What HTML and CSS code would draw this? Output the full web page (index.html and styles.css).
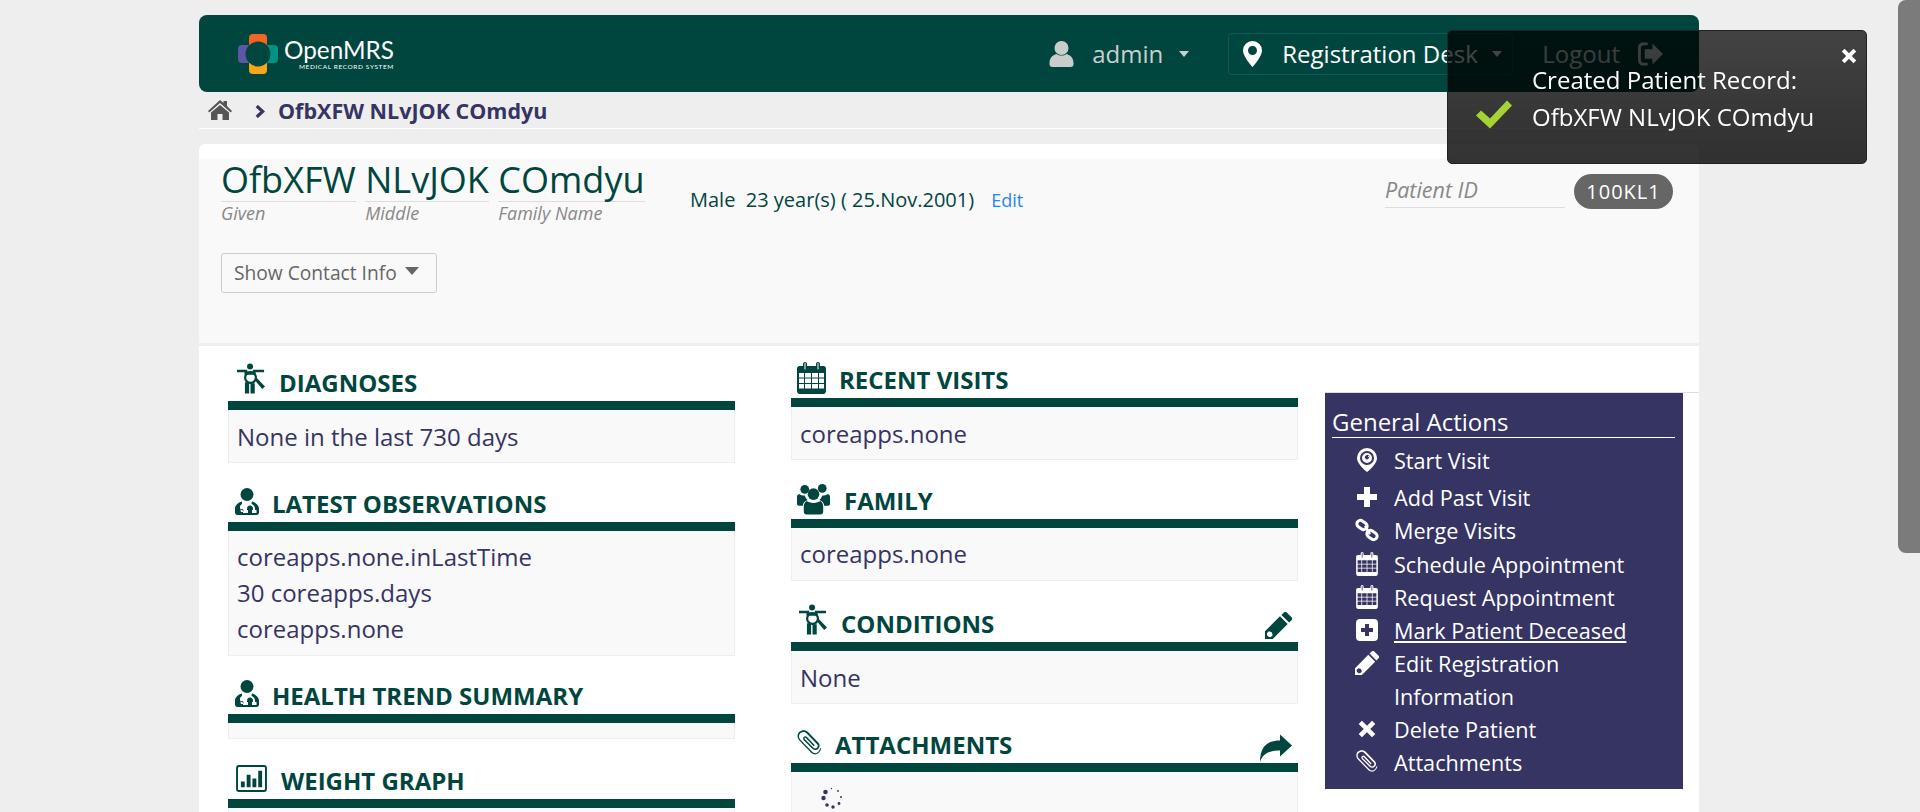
FILE: index.html
```html
<!DOCTYPE html>
<html lang="en">
<head>
<meta charset="UTF-8">
<meta name="viewport" content="width=device-width, initial-scale=1.0">
<title>OpenMRS - Patient Dashboard</title>
<link rel="stylesheet" href="styles.css">
</head>
<body>

<!-- shared icons -->
<svg class="sprite" xmlns="http://www.w3.org/2000/svg">
    <symbol id="i-body" viewBox="0 0 30 32">
        <circle cx="14" cy="3.200" r="3.200"/>
        <path d="M0 6.500h11v2.800H0zM17 6.500h12v2.800H17z"/>
        <path d="M8 8.500h12V12H8z"/>
        <path fill-rule="evenodd" d="M14.500 8a7 7 0 1 1 0 14 7 7 0 0 1 0-14zm0 2.400a4.600 4.600 0 1 0 0 9.200 4.600 4.600 0 0 0 0-9.200z"/>
        <path d="M8.500 20h4.500v12H8.500zM14.500 21H19v11h-4.500zM19 17.500l2.200-2 8.800 9-3 2.800z"/>
    </symbol>
    <symbol id="i-doctor" viewBox="0 0 24 27">
        <circle cx="12" cy="6.500" r="6.500"/>
        <path fill-rule="evenodd" d="M7 13.500C3 14.500 0 17 0 21v3.500C0 26 1 27 2.500 27h19c1.500 0 2.500-1 2.500-2.500V21c0-4-3-6.500-7-7.500l-.5 2.500c2.500 1 3.500 2.500 3.500 5v1h1.500v3h-4.500v-3h1v-1c0-2-1-3.500-3-3.500s-3 1.500-3 3.500v1h1v3H8v-2.600a3 3 0 0 1-3-3.400c0-1.500 1-2.500 2-3zM7 21a1.500 1.500 0 1 0 0 3 1.500 1.500 0 0 0 0-3z"/>
    </symbol>
    <symbol id="i-chart" viewBox="0 0 32 28">
        <path fill-rule="evenodd" d="M3 0h26a3 3 0 0 1 3 3v22a3 3 0 0 1-3 3H3a3 3 0 0 1-3-3V3a3 3 0 0 1 3-3zm0 2a1 1 0 0 0-1 1v22a1 1 0 0 0 1 1h26a1 1 0 0 0 1-1V3a1 1 0 0 0-1-1z"/>
        <path d="M5 17h4v6H5zM11 10h4v13h-4zM17 14h4v9h-4zM23 6h4v17h-4z"/>
    </symbol>
    <symbol id="i-calendar" viewBox="0 0 29 32">
        <path fill-rule="evenodd" d="M6 4V2a2 2 0 0 1 4 0v2h9V2a2 2 0 0 1 4 0v2h3.500C28 4 29 5 29 6.500V29c0 1.500-1 3-2.500 3h-24C1 32 0 30.500 0 29V6.500C0 5 1 4 2.500 4zm1.500-2.500V7a.5.5 0 0 0 1 0V1.500a.5.5 0 0 0-1 0zm13 0V7a.5.5 0 0 0 1 0V1.500a.5.5 0 0 0-1 0zM2 11v4.500h5V11zm6 0v4.500h6V11zm7 0v4.500h6V11zm7 0v4.500h5V11zM2 16.500V21h5v-4.500zm6 0V21h6v-4.500zm7 0V21h6v-4.500zm7 0V21h5v-4.500zM2 22v4.500h5V22zm6 0v4.500h6V22zm7 0v4.500h6V22zm7 0v4.500h5V22z"/>
    </symbol>
    <symbol id="i-group" viewBox="0 0 34 32">
        <circle cx="8" cy="6" r="4.500"/>
        <circle cx="26" cy="5" r="4.500"/>
        <circle cx="17" cy="11" r="6"/>
        <path d="M0 13.500c0-2 1.500-2.500 3-2.500 1 1 2.500 1.500 5 1.500.5 2 1.500 3.500 3 4.500-3 1-5 3.500-5 6H2c-1 0-2-.5-2-2zM34 13.500c0-2-1.500-2.500-3-2.500-1 1-2.500 1.500-5 1.500-.5 2-1.500 3.500-3 4.500 3 1 5 3.500 5 6h4c1 0 2-.5 2-2zM10 18c1.500 1 4 2 7 2s5.500-1 7-2c2 1 3 3 3 6v5c0 2-1 3-3 3H10c-2 0-3-1-3-3v-5c0-3 1-5 3-6z"/>
    </symbol>
    <symbol id="i-pencil" viewBox="0 0 28 28">
        <path fill-rule="evenodd" d="M21 0a2 2 0 0 1 1.500.5l5 5a2 2 0 0 1 0 3L25 11l-8-8 2.500-2.500A2 2 0 0 1 21 0zM15.500 4.500l8 8L8 28H0v-8zM4 20l-2 2v2l2 2h2l2-2-1-3z"/>
    </symbol>
    <symbol id="i-clip" viewBox="0 0 26 28">
        <path d="M25 18.500c0 5-5.500 9-10 5.500L2.500 11C-1 7 1 3 2.500 1.800 5 -.3 9 -.5 11.500 2l11 11.500c2 2.500.5 5-.5 6-1.500 1.500-4 2-6 0L7 10.500c-1-1.200-.8-2.600.2-3.500 1-.8 2.300-.8 3.300.2l8 8.500-1.200 1.200-8-8.500c-.4-.4-.8-.4-1.100-.1-.3.3-.4.700 0 1.200l9 9c1 1.100 2.600.8 3.500-.1.900-.9 1.500-2.400.2-3.700L9.900 3.400C8 1.500 5.500 1.700 3.700 3.200 2.200 4.500 1 7.500 3.800 10.300L16.300 23c3.500 2.800 7.300-.8 7.500-3.500z"/>
    </symbol>
    <symbol id="i-share" viewBox="0 0 32 28">
        <path d="M32 11 20 0v6C8 6 0 11 0 28c2-8 8-12 20-12v6z"/>
    </symbol>
    <symbol id="i-pin-circle" viewBox="-2 0 24 24">
        <path fill-rule="evenodd" d="M10 0a10 10 0 0 1 10 10c0 5-6 11-10 14C6 21 0 15 0 10A10 10 0 0 1 10 0zm0 3a7 7 0 1 0 0 14 7 7 0 0 0 0-14zm0 2a5 5 0 1 1 0 10 5 5 0 0 1 0-10zM9 7.500a2 2 0 1 0 2 0v1.500h1.500A2 2 0 0 0 9 7.500z"/>
    </symbol>
    <symbol id="i-plus" viewBox="-2 -2 24 24">
        <path d="M7 0h6v7h7v6h-7v7H7v-7H0V7h7z"/>
    </symbol>
    <symbol id="i-link" viewBox="0 0 24 24">
        <g fill="none" stroke="#fff" stroke-width="3">
            <rect x="1.500" y="3.500" width="11" height="7" rx="3.500" transform="rotate(35 7 7)"/>
            <rect x="11.500" y="13.500" width="11" height="7" rx="3.500" transform="rotate(35 17 17)"/>
        </g>
        <path d="M9 8.500 11 7l5 8.500-2 1.500z"/>
    </symbol>
    <symbol id="i-plus-square" viewBox="-1 -1 24 24">
        <path fill-rule="evenodd" d="M4 0h14a4 4 0 0 1 4 4v14a4 4 0 0 1-4 4H4a4 4 0 0 1-4-4V4a4 4 0 0 1 4-4zm5 5v4H5v4h4v4h4v-4h4V9h-4V5z"/>
    </symbol>
    <symbol id="i-times" viewBox="-3 -3 26 26">
        <path d="M4.500 1 10 6.500 15.500 1 19 4.500 13.500 10l5.500 5.500-3.500 3.500L10 13.500 4.500 19 1 15.500 6.500 10 1 4.500z"/>
    </symbol>
    <symbol id="i-times-small" viewBox="0 0 20 20">
        <path d="M4.500 1 10 6.500 15.500 1 19 4.500 13.500 10l5.500 5.500-3.500 3.500L10 13.500 4.500 19 1 15.500 6.500 10 1 4.500z"/>
    </symbol>
</svg>

<div class="page">
    <header class="topbar">
        <div class="logo">
            <svg class="logo-mark" viewBox="0 0 40 40">
                <rect fill="#f26522" x="11" y="0" width="18" height="16" rx="4"/>
                <rect fill="#009384" x="24" y="11" width="16" height="18" rx="4"/>
                <rect fill="#f9a61a" x="11" y="24" width="18" height="16" rx="4"/>
                <rect fill="#5b57a6" x="0" y="11" width="16" height="18" rx="4"/>
                <circle fill="#00463f" cx="20" cy="20" r="12.500"/>
            </svg>
            <div class="logo-text">
                <span class="logo-name">OpenMRS</span>
                <span class="logo-sub">MEDICAL RECORD SYSTEM</span>
            </div>
        </div>
        <div class="nav-item nav-user">
            <svg class="nav-icon-user" viewBox="0 0 24 26"><circle cx="12" cy="7" r="7"/><path d="M7 13c3 2 7 2 10 0 4 1 7 4 7 9v1c0 2-1 3-3 3H3c-2 0-3-1-3-3v-1c0-5 3-8 7-9z"/></svg>
            <span>admin</span>
            <i class="caret"></i>
        </div>
        <div class="nav-item nav-location">
            <svg class="nav-icon-pin" viewBox="0 0 19 26"><path fill-rule="evenodd" d="M9.500 0A9.500 9.500 0 0 1 19 9.500C19 15 12 23 9.500 26 7 23 0 15 0 9.500A9.500 9.500 0 0 1 9.500 0zm0 5a4.500 4.500 0 1 0 0 9 4.500 4.500 0 0 0 0-9z"/></svg>
            <span>Registration Desk</span>
            <i class="caret"></i>
        </div>
        <div class="nav-item nav-logout">
            <span>Logout</span>
            <svg class="nav-icon-logout" viewBox="0 0 26 24"><path d="M10 0v3H6C4 3 3 4 3 6v12c0 2 1 3 3 3h4v3H6c-4 0-6-2-6-6V6c0-4 2-6 6-6z"/><path d="M26 12 15 1v6H7v10h8v6z"/></svg>
        </div>
    </header>

    <div class="crumbs">
        <svg class="crumb-home" viewBox="0 0 24 20"><path d="M12 0 15.500 3V1H19v5l5 5-1.200 1.400L12 3 1.200 12.400 0 11z"/><path d="M12 5l9 7.500V20h-6.500v-6h-5v6H3v-7.500z"/></svg>
        <svg class="crumb-sep" viewBox="0 0 9 12"><path d="M1.500 1 7 6l-5.500 5" fill="none" stroke="currentColor" stroke-width="3"/></svg>
        <span class="crumb-name">OfbXFW NLvJOK COmdyu</span>
    </div>

    <main class="card">
        <section class="patient">
            <div class="patient-top">
                <div class="name-part"><div class="name-value">OfbXFW</div><em>Given</em></div>
                <div class="name-part"><div class="name-value">NLvJOK</div><em>Middle</em></div>
                <div class="name-part"><div class="name-value">COmdyu</div><em>Family Name</em></div>
                <div class="demographics">Male &nbsp;23 year(s) ( 25.Nov.2001) <a href="#" class="edit-link">Edit</a></div>
                <div class="patient-id">
                    <em>Patient ID</em>
                    <span class="id-badge">100KL1</span>
                </div>
            </div>
            <button class="contact-btn">Show Contact Info <i class="caret-dark"></i></button>
        </section>

        <div class="dash">
            <div class="col col-left">
                <div class="widget widget-first">
                    <h3 class="widget-head"><svg class="ico ico-body"><use href="#i-body"/></svg>Diagnoses</h3>
                    <div class="widget-box">None in the last 730 days</div>
                </div>
                <div class="widget widget-obs">
                    <h3 class="widget-head"><svg class="ico ico-doctor"><use href="#i-doctor"/></svg>Latest Observations</h3>
                    <div class="widget-box">coreapps.none.inLastTime<br>30 coreapps.days<br>coreapps.none</div>
                </div>
                <div class="widget widget-trend">
                    <h3 class="widget-head"><svg class="ico ico-doctor"><use href="#i-doctor"/></svg>Health Trend Summary</h3>
                    <div class="widget-box"></div>
                </div>
                <div class="widget">
                    <h3 class="widget-head"><svg class="ico ico-chart"><use href="#i-chart"/></svg>Weight Graph</h3>
                    <div class="widget-box widget-open"></div>
                </div>
            </div>

            <div class="col col-mid">
                <div class="widget">
                    <h3 class="widget-head"><svg class="ico ico-calendar"><use href="#i-calendar"/></svg>Recent Visits</h3>
                    <div class="widget-box">coreapps.none</div>
                </div>
                <div class="widget widget-family">
                    <h3 class="widget-head"><svg class="ico ico-group"><use href="#i-group"/></svg>Family</h3>
                    <div class="widget-box">coreapps.none</div>
                </div>
                <div class="widget">
                    <h3 class="widget-head"><svg class="ico ico-body"><use href="#i-body"/></svg>Conditions<svg class="head-action ico-pencil"><use href="#i-pencil"/></svg></h3>
                    <div class="widget-box">None</div>
                </div>
                <div class="widget">
                    <h3 class="widget-head"><svg class="ico ico-clip"><use href="#i-clip"/></svg>Attachments<svg class="head-action ico-share"><use href="#i-share"/></svg></h3>
                    <div class="widget-box widget-open">
                        <svg class="spinner" viewBox="0 0 22 22">
                            <circle cx="4.500" cy="5" r="2.300"/>
                            <circle cx="2.500" cy="11" r="2.200"/>
                            <circle cx="6" cy="18" r="1.800"/>
                            <circle cx="12" cy="20" r="1.700"/>
                            <circle cx="18" cy="16.500" r="1.400"/>
                            <circle cx="20" cy="10" r="1"/>
                            <circle cx="17" cy="4" r=".9"/>
                            <circle cx="10.500" cy="1.500" r=".7"/>
                        </svg>
                    </div>
                </div>
            </div>

            <aside class="col col-right">
                <div class="actions">
                    <h4 class="actions-title">General Actions</h4>
                    <ul class="action-list">
                        <li class="action action-first"><svg class="action-icon"><use href="#i-pin-circle"/></svg>Start Visit</li>
                        <li class="action"><svg class="action-icon"><use href="#i-plus"/></svg>Add Past Visit</li>
                        <li class="action"><svg class="action-icon"><use href="#i-link"/></svg>Merge Visits</li>
                        <li class="action"><svg class="action-icon"><use href="#i-calendar"/></svg>Schedule Appointment</li>
                        <li class="action"><svg class="action-icon"><use href="#i-calendar"/></svg>Request Appointment</li>
                        <li class="action action-hover"><svg class="action-icon"><use href="#i-plus-square"/></svg><span>Mark Patient Deceased</span></li>
                        <li class="action action-wrap"><svg class="action-icon"><use href="#i-pencil"/></svg><span>Edit Registration Information</span></li>
                        <li class="action"><svg class="action-icon"><use href="#i-times"/></svg>Delete Patient</li>
                        <li class="action"><svg class="action-icon"><use href="#i-clip"/></svg>Attachments</li>
                    </ul>
                </div>
            </aside>
        </div>
    </main>
</div>

<!-- toast message, sits over the header -->
<div class="toast">
    <svg class="toast-close"><use href="#i-times-small"/></svg>
    <svg class="toast-check" viewBox="0 0 36 28"><path d="M31 0 36 5 14 28 0 15l5-5 9 8z"/></svg>
    <div class="toast-text">Created Patient Record:<br>OfbXFW NLvJOK COmdyu</div>
</div>

<div class="scrollbar"></div>

</body>
</html>
```

FILE: styles.css
```css
html, body {
    margin: 0;
    padding: 0;
    height: 100%;
    overflow: hidden;
}
body {
    font-family: "Open Sans", "Liberation Sans", sans-serif;
    background-color: #eeeeee;
    color: #363463;
    padding-right: 22px;
    box-sizing: border-box;
}
.sprite {
    display: none;
}
.page {
    width: 1500px;
    margin: 0 auto;
    padding-top: 15px;
}

/* header */
.topbar {
    height: 77px;
    background-color: #00463f;
    border-radius: 8px;
    display: flex;
    align-items: center;
    padding-right: 36px;
    box-sizing: border-box;
    color: #c9d0ce;
    font-size: 24px;
}
.logo {
    display: flex;
    margin-left: 39px;
    align-items: center;
    flex: 1;
}
.logo-mark {
    width: 40px;
    height: 40px;
}
.logo-text {
    margin-left: 6px;
    display: flex;
    flex-direction: column;
    align-items: flex-end;
    color: #fff;
    font-family: Lato, sans-serif;
}
.logo-name {
    font-size: 24.3px;
    font-weight: 400;
    line-height: 26px;
}
.logo-sub {
    font-size: 6.5px;
    line-height: 8px;
    letter-spacing: .6px;
}
.nav-item {
    display: flex;
    align-items: center;
}
.nav-icon-user {
    width: 25px;
    height: 26px;
    fill: #c9cecc;
    margin-right: 18px;
}
.caret {
    width: 0;
    height: 0;
    border-left: 5px solid transparent;
    border-right: 5px solid transparent;
    border-top: 6px solid currentColor;
    margin-left: 16px;
}
.nav-location {
    width: 285px;
    height: 42px;
    box-sizing: border-box;
    margin-left: 39px;
    padding-left: 14px;
    border: 1px solid #0b5c53;
    border-radius: 4px;
    color: #fff;
}
.nav-location .caret {
    margin-left: 14px;
}
.nav-icon-pin {
    width: 19px;
    height: 26px;
    fill: #fff;
    margin-right: 20px;
}
.nav-logout {
    margin-left: 29px;
    color: #e4e4e4;
}
.nav-icon-logout {
    width: 25px;
    height: 24px;
    margin-left: 18px;
    fill: currentColor;
}

/* breadcrumbs */
.crumbs {
    height: 36px;
    border-bottom: 1px solid #fff;
    display: flex;
    align-items: center;
    font-size: 21.5px;
    font-weight: 700;
}
.crumb-home {
    width: 24px;
    height: 20px;
    margin-left: 9px;
    fill: #555;
}
.crumb-sep {
    width: 10px;
    height: 13px;
    margin-left: 23px;
    margin-top: 3px;
    color: #363463;
}
.crumb-name {
    margin-left: 13px;
}

/* patient card */
.card {
    margin-top: 15px;
    background-color: #fff;
    border-radius: 6px 6px 0 0;
    padding-top: 15px;
    height: 700px;
}
.patient {
    height: 184px;
    background-color: #f9f9f9;
    border-bottom: 3px solid #eeeeee;
    padding: 0 26px 0 22px;
}
.patient-top {
    display: flex;
    align-items: flex-start;
}
.name-part {
    margin-right: 9.5px;
    color: #888;
}
.name-part em {
    font-size: 18px;
    line-height: 22px;
    display: block;
}
.name-value {
    font-size: 36px;
    line-height: 42px;
    color: #00463f;
    border-bottom: 1px solid #ddd;
}
.demographics {
    margin: 29px 0 0 36px;
    font-size: 20px;
    line-height: 24px;
    color: #00463f;
}
.edit-link {
    margin-left: 12px;
    color: #1e88f0;
    text-decoration: none;
    font-size: 18px;
}
.patient-id {
    margin: 15px 0 0 auto;
    display: flex;
    align-items: flex-start;
}
.patient-id em {
    width: 180px;
    height: 33px;
    margin-left: -1px;
    font-size: 21.5px;
    line-height: 32px;
    color: #888;
    border-bottom: 1px solid #ddd;
}
.id-badge {
    margin-left: 9px;
    width: 99px;
    height: 35px;
    border-radius: 18px;
    background-color: #666;
    color: #fff;
    font-size: 20px;
    line-height: 35px;
    text-align: center;
    letter-spacing: 1px;
}
.contact-btn {
    display: flex;
    align-items: center;
    width: 216px;
    height: 40px;
    margin-top: 29px;
    padding: 0 0 2px 12px;
    background-color: #f9f9f9;
    border: 1px solid #ccc;
    border-radius: 3px;
    color: #666;
    font-family: inherit;
    font-size: 19.2px;
}
.caret-dark {
    width: 0;
    height: 0;
    border-left: 7px solid transparent;
    border-right: 7px solid transparent;
    border-top: 8px solid #666;
    margin-left: 8px;
    margin-bottom: 3px;
}

/* dashboard columns */
.dash {
    display: flex;
    align-items: flex-start;
}
.col-left {
    width: 507px;
    margin-left: 29px;
    padding-top: 17px;
}
.col-mid {
    width: 507px;
    margin-left: 56px;
    padding-top: 14px;
}
.col-right {
    flex: 1;
    margin: 46px 0 0 27px;
    border-top: 1px solid #ddd;
}
.widget {
    margin-bottom: 21px;
}
.widget-family {
    margin-bottom: 23px;
}
.col-left .widget {
    margin-bottom: 20px;
}
.col-left .widget-first {
    margin-bottom: 21px;
}
.col-left .widget-trend {
    margin-bottom: 22px;
}
.widget-head {
    position: relative;
    display: flex;
    align-items: center;
    height: 47px;
    margin: 0;
    padding: 2px 0 0 9px;
    border-bottom: 9px solid #00463f;
    box-sizing: border-box;
    color: #00463f;
    font-size: 24px;
    font-weight: 700;
    text-transform: uppercase;
    line-height: 30px;
}
.ico {
    fill: #00463f;
    flex: none;
}
.ico-body {
    width: 28px;
    height: 31px;
    margin: -9px 14px 0 0;
}
.col-mid .ico-body {
    margin-left: -1px;
}
.ico-doctor {
    width: 24px;
    height: 27px;
    margin: -5px 13px 0 -2px;
}
.ico-chart {
    width: 33px;
    height: 27px;
    margin: -5px 13px 0 -2px;
}
.ico-calendar {
    width: 29px;
    height: 32px;
    margin: -5px 13px 0 -3px;
}
.ico-group {
    width: 33px;
    height: 32px;
    margin: -4px 14px 0 -3px;
}
.ico-clip {
    width: 25px;
    height: 27px;
    margin: -4px 13px 0 -3px;
}
.head-action {
    position: absolute;
    fill: #00463f;
}
.ico-pencil {
    right: 6px;
    top: 8px;
    width: 27px;
    height: 27px;
}
.ico-share {
    right: 6px;
    top: 9px;
    width: 32px;
    height: 29px;
}
.widget-box {
    background-color: #f9f9f9;
    border: 1px solid #eee;
    border-top: 0;
    padding: 9px 8px 7px;
    font-size: 24px;
    line-height: 36px;
    box-sizing: border-box;
}
.widget-obs .widget-box,
.widget-family .widget-box {
    padding: 8px;
}
.widget-trend .widget-box {
    height: 16px;
    padding: 0;
}
.widget-open {
    height: 120px;
}
.spinner {
    display: block;
    width: 22px;
    height: 22px;
    margin: 6px 0 0 21px;
    fill: #363463;
}

/* general actions */
.actions {
    width: 358px;
    height: 396px;
    box-sizing: border-box;
    padding: 0 8px 0 7px;
    background-color: #363463;
    color: #fff;
}
.actions-title {
    margin: 0;
    height: 44px;
    border-bottom: 1px solid #fff;
    font-size: 24px;
    font-weight: 400;
    line-height: 58px;
}
.action-list {
    list-style: none;
    margin: 0;
    padding: 6px 0 0;
}
.action {
    display: flex;
    align-items: flex-start;
    font-size: 21.65px;
    line-height: 33.2px;
    padding-left: 62px;
    position: relative;
}
.action-first {
    margin-bottom: 4px;
}
.action-hover span {
    text-decoration: underline;
}
.action-wrap {
    width: 220px;
    margin-bottom: -.5px;
}
.action-icon {
    position: absolute;
    left: 23px;
    top: 4px;
    width: 24px;
    height: 24px;
    fill: #fff;
}

/* toast */
.toast {
    position: fixed;
    left: 1447px;
    top: 30px;
    width: 420px;
    height: 134px;
    box-sizing: border-box;
    background: linear-gradient(#000000b8, #000000cc);
    border: 1px solid #222;
    border-radius: 5px;
    color: #fff;
    font-size: 24px;
    line-height: 37px;
}
.toast-text {
    position: absolute;
    left: 84px;
    top: 30px;
}
.toast-check {
    position: absolute;
    left: 28px;
    top: 69px;
    width: 36px;
    height: 29px;
    fill: #a5d334;
}
.toast-close {
    position: absolute;
    left: 393px;
    top: 17px;
    width: 16px;
    height: 16px;
    fill: #fff;
}

.scrollbar {
    position: fixed;
    right: 0;
    top: 0;
    width: 22px;
    height: 553px;
    background-color: #7b7b7b;
    border-radius: 8px 0 0 8px;
}
```
